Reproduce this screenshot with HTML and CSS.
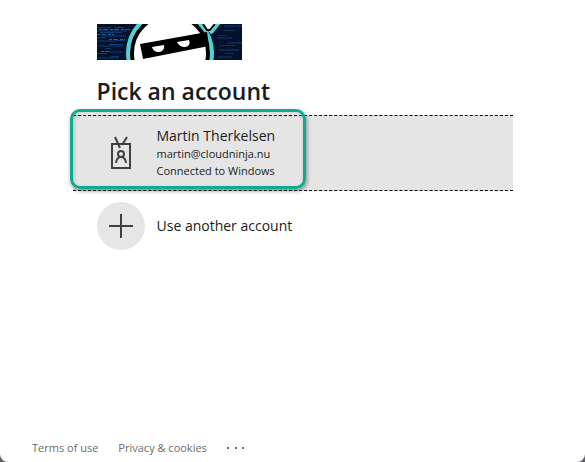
FILE: index.html
```
<!DOCTYPE html>
<html lang="en">
<head>
    <meta charset="utf-8">
    <title>Pick an account</title>
    <link rel="stylesheet" href="styles.css">
</head>
<body>
    <main class="picker">
        <svg class="logo" width="145" height="36" viewBox="0 0 145 36" role="img" aria-label="Company logo">
            <rect width="145" height="36" fill="#03112a"/>
            <!-- data streaks behind the ninja -->
            <g fill="none" stroke-width="1">
                <path stroke="#0c3c70" d="M0 3.500h14M18 3.500h9M3 8.500h22M0 13.500h9M14 16.500h14M12 20.500h14M8 24.500h6M0 29.500h10M14 32.500h8"/>
                <path stroke="#1d659b" stroke-dasharray="3 1 5 2" d="M2 5.500h31M0 10.500h17M12 15.500h16M4 27.500h12"/>
                <path stroke="#082650" stroke-width="2" d="M0 7h30M5 12h24M0 17h20M0 22h26M12 28h14M0 34h22M127 2h18M120 14h15M130 19h15M122 26h20M121 33h14"/>
                <path stroke="#0b3260" d="M126 6.500h12M121 11.500h9M124 21.500h14M128 29.500h9"/>
            </g>
            <circle cx="73" cy="29" r="42" fill="#fff" stroke="#4fd3d6" stroke-width="4"/>
            <circle cx="73" cy="29" r="38" fill="#fff" stroke="#000" stroke-width="4"/>
            <path d="M43 20l67-12 2 14-66 13z" fill="#000"/>
            <!-- bandana knot -->
            <path d="M107 0h16l-9 9-4-3z" fill="#fff"/>
            <path d="M106 0l4 6 3 0 5-6" fill="none" stroke="#000" stroke-width="2"/>
            <path d="M113 9l2-1 7-9" fill="none" stroke="#4fd3d6" stroke-width="3"/>
            <path d="M55 23l12-2c1 4-2 7-5 7s-6-1-7-5zM80 18l12-2c2 4-1 7-4 7s-6-1-8-5z" fill="#fff"/>
        </svg>
        <h1 class="title">Pick an account</h1>

        <div class="account-row">
            <button type="button" class="account account-connected">
                <span class="tile-icon">
                    <svg width="48" height="48" viewBox="0 0 48 48" fill="none" stroke="#404040" stroke-width="2" aria-hidden="true">
                        <path d="M15 15h18v24H15z"/>
                        <path d="M18 8l5 11M30 8l-5 8"/>
                        <circle cx="24" cy="25" r="3"/>
                        <path d="M19 34c0-3 2-6 5-6s5 3 5 6"/>
                    </svg>
                </span>
                <span class="account-text">
                    <span class="account-name">Martin Therkelsen</span>
                    <span class="account-detail">martin@cloudninja.nu</span>
                    <span class="account-detail">Connected to Windows</span>
                </span>
            </button>
            <div class="highlight"></div>
        </div>

        <button type="button" class="account account-other">
            <span class="tile-icon tile-round">
                <svg width="48" height="48" viewBox="0 0 48 48" fill="none" stroke="#404040" stroke-width="2" aria-hidden="true">
                    <path d="M24 12v24M12 24h24"/>
                </svg>
            </span>
            <span class="account-name">Use another account</span>
        </button>
    </main>

    <footer class="footer">
        <a href="#">Terms of use</a>
        <a href="#">Privacy &amp; cookies</a>
        <button type="button" class="more" aria-label="More options">
            <svg width="18" height="4" viewBox="0 0 18 4" fill="#6b6b6b" aria-hidden="true">
                <path d="M0 2h2v2H0zM8 2h2v2H8zM15 2h2v2h-2z"/>
            </svg>
        </button>
    </footer>
</body>
</html>
```
FILE: styles.css
```
* {
    box-sizing: border-box;
}
html {
    background: #5d6268;
}
body {
    margin: 0;
    min-height: 100vh;
    display: flex;
    flex-direction: column;
    background: #fff;
    border-radius: 0 0 8px 8px;
    color: #1b1b1b;
    font-family: "Segoe UI", "Open Sans", "Noto Sans", sans-serif;
}
button {
    font: inherit;
    color: inherit;
    border: none;
    background: none;
    cursor: pointer;
}
.picker {
    flex: 1;
    width: 100%;
    max-width: 440px;
    margin: 0 auto;
    padding-top: 24px;
}
.logo {
    display: block;
    margin-left: 24px;
}
.title {
    margin: 15px 0 8px 24px;
    font-size: 23px;
    line-height: 32px;
    font-weight: 600;
}
.account-row {
    position: relative;
}
.account {
    display: flex;
    align-items: center;
    gap: 12px;
    width: 100%;
    padding: 0 24px;
    text-align: left;
}
.account-connected {
    height: 76px;
    background: #e5e5e5;
    border-top: 1px dashed #000;
    border-bottom: 1px dashed #000;
}
.account-other {
    height: 70px;
}
.tile-icon {
    display: block;
    width: 48px;
    height: 48px;
}
.tile-round {
    border-radius: 50%;
    background: #e6e6e6;
}
.account-text {
    display: flex;
    flex-direction: column;
}
.account-name {
    font-size: 14px;
    line-height: 18px;
}
.account-detail {
    font-size: 11px;
    line-height: 17px;
}
.highlight {
    position: absolute;
    top: -6px;
    left: -3px;
    width: 236px;
    height: 80px;
    border: 3px solid #0aae8e;
    border-radius: 10px;
    box-shadow: 1px 2px 4px rgba(0, 0, 0, 0.4), inset 1px 2px 4px rgba(0, 0, 0, 0.2);
    pointer-events: none;
}
.footer {
    display: flex;
    align-items: center;
    gap: 20px;
    height: 28px;
    padding: 0 32px 2px;
    font-size: 11px;
}
.footer a {
    color: #6b6b6b;
    text-decoration: none;
}
.more {
    display: flex;
    padding: 0;
}
```
